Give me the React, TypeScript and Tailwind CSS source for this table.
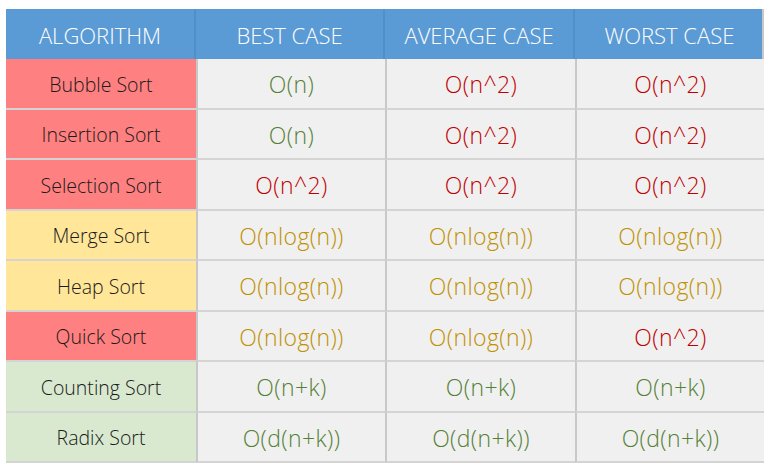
const rows: { name: string; tone: "red" | "yellow" | "green"; cells: [string, string][] }[] = [
  { name: "Bubble Sort", tone: "red", cells: [["O(n)", "g"], ["O(n^2)", "r"], ["O(n^2)", "r"]] },
  { name: "Insertion Sort", tone: "red", cells: [["O(n)", "g"], ["O(n^2)", "r"], ["O(n^2)", "r"]] },
  { name: "Selection Sort", tone: "red", cells: [["O(n^2)", "r"], ["O(n^2)", "r"], ["O(n^2)", "r"]] },
  { name: "Merge Sort", tone: "yellow", cells: [["O(nlog(n))", "y"], ["O(nlog(n))", "y"], ["O(nlog(n))", "y"]] },
  { name: "Heap Sort", tone: "yellow", cells: [["O(nlog(n))", "y"], ["O(nlog(n))", "y"], ["O(nlog(n))", "y"]] },
  { name: "Quick Sort", tone: "red", cells: [["O(nlog(n))", "y"], ["O(nlog(n))", "y"], ["O(n^2)", "r"]] },
  { name: "Counting Sort", tone: "green", cells: [["O(n+k)", "g"], ["O(n+k)", "g"], ["O(n+k)", "g"]] },
  { name: "Radix Sort", tone: "green", cells: [["O(d(n+k))", "g"], ["O(d(n+k))", "g"], ["O(d(n+k))", "g"]] },
]

const toneBg = {
  red: "bg-[#ff8080]",
  yellow: "bg-[#ffe699]",
  green: "bg-[#d8e9d0]",
}

const textColor: Record<string, string> = {
  g: "text-[#548235]",
  r: "text-[#c00000]",
  y: "text-[#bf9000]",
}

const headers = ["ALGORITHM", "BEST CASE", "AVERAGE CASE", "WORST CASE"]

export default function App() {
  return (
    <div className="w-[773px] h-[471px] bg-white pt-[9px] pl-[6px] font-['Open_Sans',sans-serif] font-light">
      <div className="w-[758px] border-r-2 border-[#c8c8c8]">
        {/* Header */}
        <div className="grid grid-cols-[190px_189px_190px_189px] h-[50px] bg-[#5b9bd5]">
          {headers.map((h, i) => (
            <div
              key={h}
              className={`flex items-center justify-center pt-[2px] text-white text-[22px] ${
                i < 3 ? "border-r-2 border-[#4f8fca]" : ""
              }`}
            >
              {h}
            </div>
          ))}
        </div>

        {/* Body */}
        {rows.map((row) => (
          <div key={row.name} className="grid grid-cols-[190px_189px_190px_189px] h-[50.5px]">
            <div
              className={`flex items-center justify-center pt-[2px] text-[19.5px] text-[#1a1a1a] border-b-2 border-[#d4d4d4] ${toneBg[row.tone]}`}
            >
              {row.name}
            </div>
            {row.cells.map(([val, c], i) => (
              <div
                key={i}
                className={`flex items-center justify-center pt-[2px] text-[23px] tracking-[0.4px] bg-[#f0f0f0] border-b-2 border-[#d4d4d4] border-l-2 border-l-[#c8c8c8] ${textColor[c]}`}
              >
                {val}
              </div>
            ))}
          </div>
        ))}
      </div>
    </div>
  )
}
